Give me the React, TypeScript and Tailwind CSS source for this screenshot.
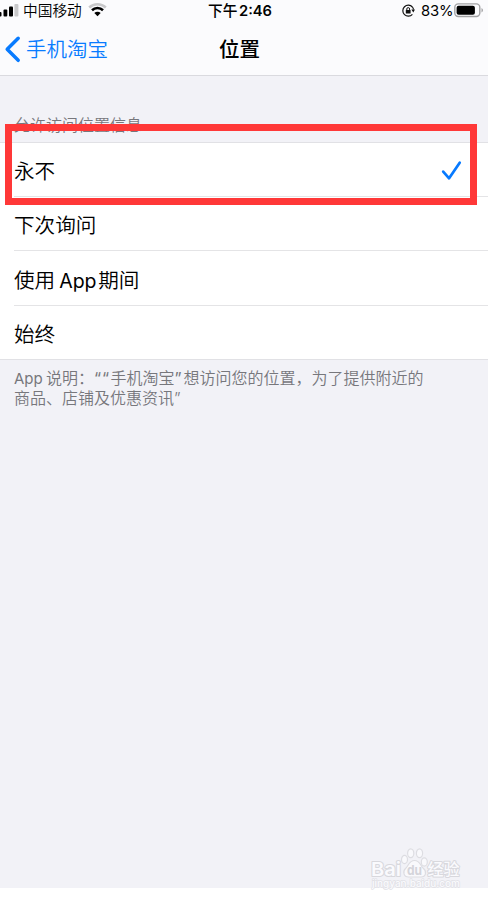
import type { ReactNode } from 'react';

const cjk = "font-['Inter','Noto_Sans_CJK_SC',sans-serif]";

function Latin({ className, children }: { className: string; children: ReactNode }) {
  return <span className={`inline-block whitespace-nowrap font-normal ${className}`}>{children}</span>;
}

function StatusBar() {
  return (
    <div className="flex h-[21px] items-center text-[14.7px] leading-[21px] text-black">
      <div className="flex w-[208px] shrink-0 items-center">
        <svg width="19" height="21" viewBox="0 0 19 21">
          <rect x="-2" y="12" width="3.5" height="4.5" rx="1" fill="#000" />
          <rect x="3.5" y="9.5" width="3.8" height="7" rx="1" fill="#000" />
          <rect x="9" y="6.5" width="4" height="10" rx="1" fill="#000" />
          <rect x="14.4" y="4" width="4" height="12.5" rx="1" fill="#c8c8ca" />
        </svg>
        <span className="ml-[4px] w-[60px] whitespace-nowrap pt-[2px]">中国移动</span>
        <svg className="ml-[4.5px]" width="19" height="21" viewBox="0 0 19 21">
          <path d="M1.2 7.5C5.8 3.1 13.2 3.1 17.8 7.5" fill="none" stroke="#c8c8ca" strokeWidth="2.5" />
          <path d="M4 10.2C7 7.3 12 7.3 15 10.2" fill="none" stroke="#000" strokeWidth="2.6" />
          <path d="M6.3 12.9C8.1 11.2 10.9 11.2 12.7 12.9L9.5 16.2Z" fill="#000" />
        </svg>
      </div>
      <div className="flex w-[193px] shrink-0 whitespace-nowrap pt-[1px] font-medium">
        <span className="w-[31px] pt-[1px]">下午</span>
        <span className="pt-[1px] font-semibold">2:46</span>
      </div>
      <svg width="14" height="21" viewBox="0 0 14 21">
        <path d="M11.4 7A5.5 5.5 0 1 0 11.4 14.4" fill="none" stroke="#111" strokeWidth="1.2" />
        <path d="M11.4 7A5.5 5.5 0 0 1 12.5 9.5" fill="none" stroke="#111" strokeWidth="1.2" />
        <path d="M10.4 9.4H14L12.3 12.6Z" fill="#111" />
        <rect x="4.8" y="10" width="4.8" height="3.6" rx=".5" fill="#111" />
        <path d="M5.8 10.2V9a1.4 1.4 0 0 1 2.8 0V10.2" fill="none" stroke="#111" strokeWidth="1" />
      </svg>
      <span className="ml-[6px] w-[32px] whitespace-nowrap pt-[1px] text-[14.8px] font-normal tracking-[-0.2px]">83%</span>
      <svg width="31" height="21" viewBox="0 0 31 21">
        <rect x="1.8" y="3.9" width="25" height="12.6" rx="3.5" fill="none" stroke="#a2a2a4" strokeWidth="1.4" />
        <rect x="3.6" y="5.7" width="18.3" height="9" rx="2" fill="#000" />
        <path d="M28.5 8v4.4c2-.8 2-3.6 0-4.4Z" fill="#a2a2a4" />
      </svg>
    </div>
  );
}

function Row({ children, height, first = false, checked = false }: { children: ReactNode; height: string; first?: boolean; checked?: boolean }) {
  return (
    <div className="flex pl-[14px]">
      <div
        className={`flex flex-1 items-center justify-between text-[20.6px] leading-[30px] text-black ${height} ${
          first ? '' : 'border-t border-[#e4e4e6]'
        }`}
      >
        <span className="whitespace-nowrap pt-[5px]">{children}</span>
        {checked && (
          <svg className="mr-[26px] mt-[1px]" width="21" height="21" viewBox="0 0 21 21">
            <path d="M2.2 11.6L8.1 18.3L18.7 2.7" fill="none" stroke="#077aff" strokeWidth="2.7" strokeLinecap="round" strokeLinejoin="round" />
          </svg>
        )}
      </div>
    </div>
  );
}

function Watermark() {
  return (
    <svg className="absolute left-[366px] top-[842px]" width="100" height="52" viewBox="0 0 100 52">
      <g fill="#f9f9fc" stroke="#dddde2" strokeWidth="1.2">
        <ellipse cx="38.5" cy="17.5" rx="3" ry="4.2" />
        <ellipse cx="44.7" cy="11.2" rx="3.1" ry="4.4" />
        <ellipse cx="53.5" cy="11.2" rx="3.1" ry="4.4" />
        <ellipse cx="58.3" cy="20" rx="3" ry="4.2" />
        <path d="M48.5 18.5C43 18.5 42.5 24 39.5 26.5C36.5 29.5 37.5 35 42.5 35H55C60 35 61 29.5 57.5 26.5C54.5 24 54 18.5 48.5 18.5Z" />
      </g>
      <g stroke="#d8d8dd" fill="#fafafd" strokeLinejoin="round" className="[paint-order:stroke]">
        <text x="5" y="34" fontSize="19" fontWeight="600" fontFamily="Inter, sans-serif" strokeWidth="2" textLength="30" lengthAdjust="spacingAndGlyphs">Bai</text>
        <text x="61.5" y="33" fontSize="16" fontWeight="500" fontFamily="Noto Sans CJK SC, sans-serif" strokeWidth="2" textLength="32" lengthAdjust="spacingAndGlyphs">经验</text>
        <text x="6" y="45" fontSize="10" fontWeight="500" fontFamily="Inter, sans-serif" strokeWidth="1.4" stroke="#e0e0e5" textLength="88" lengthAdjust="spacingAndGlyphs">jingyan.baidu.com</text>
      </g>
      <text x="41" y="33" fontSize="13" fontWeight="700" fontFamily="Inter, sans-serif" fill="#d4d4da" textLength="15" lengthAdjust="spacingAndGlyphs">du</text>
    </svg>
  );
}

export default function App() {
  return (
    <div className={`relative h-[902px] w-[488px] overflow-hidden bg-white [font-weight:350] ${cjk}`}>
      <div className="flex h-[888px] flex-col bg-[#f2f2f7]">
        <header className="h-[76px] shrink-0 border-b border-[#dadadf] bg-[#fbfbfd]">
          <StatusBar />
          <div className="flex h-[54px] items-center text-[20.5px] leading-[30px]">
            <div className="flex w-[219px] items-center text-[#087bff]">
              <svg width="26" height="30" viewBox="0 0 26 30">
                <path d="M18.2 5.3L7.2 16.3L18.2 27.3" fill="none" stroke="#087bff" strokeWidth="3.5" strokeLinecap="round" strokeLinejoin="round" />
              </svg>
              <span className="whitespace-nowrap pt-[4px]">手机淘宝</span>
            </div>
            <h1 className="whitespace-nowrap pt-[4px] font-medium text-black">位置</h1>
          </div>
        </header>
        <main>
          <div className="h-[66px] pl-[14px] pt-[37px] text-[16px] leading-[24px] text-[#77777c]">允许访问位置信息</div>
          <section className="border-y border-[#e1e1e5] bg-white">
            <Row height="h-[53px]" first checked>永不</Row>
            <Row height="h-[54px]">下次询问</Row>
            <Row height="h-[55px]">使用<Latin className="ml-[4px] mr-[2px] w-[37px] text-[19.5px]">App</Latin>期间</Row>
            <Row height="h-[54px]">始终</Row>
          </section>
          <div className="whitespace-nowrap pl-[14px] pt-[9px] text-[16px] leading-[19.5px] text-[#77777c]">
            <div>
              <Latin className="w-[32px] text-[15px]">App</Latin>说明：<Latin className="w-[16.5px] tracking-[1px]">““</Latin>手机淘宝<Latin className="w-[9px]">”</Latin>想访问您的位置，为了提供附近的
            </div>
            <div>商品、店铺及优惠资讯”</div>
          </div>
        </main>
      </div>
      <div className="absolute left-[5px] top-[124px] h-[81px] w-[472px] border-[7px] border-[#ff3838]" />
      <Watermark />
    </div>
  );
}
